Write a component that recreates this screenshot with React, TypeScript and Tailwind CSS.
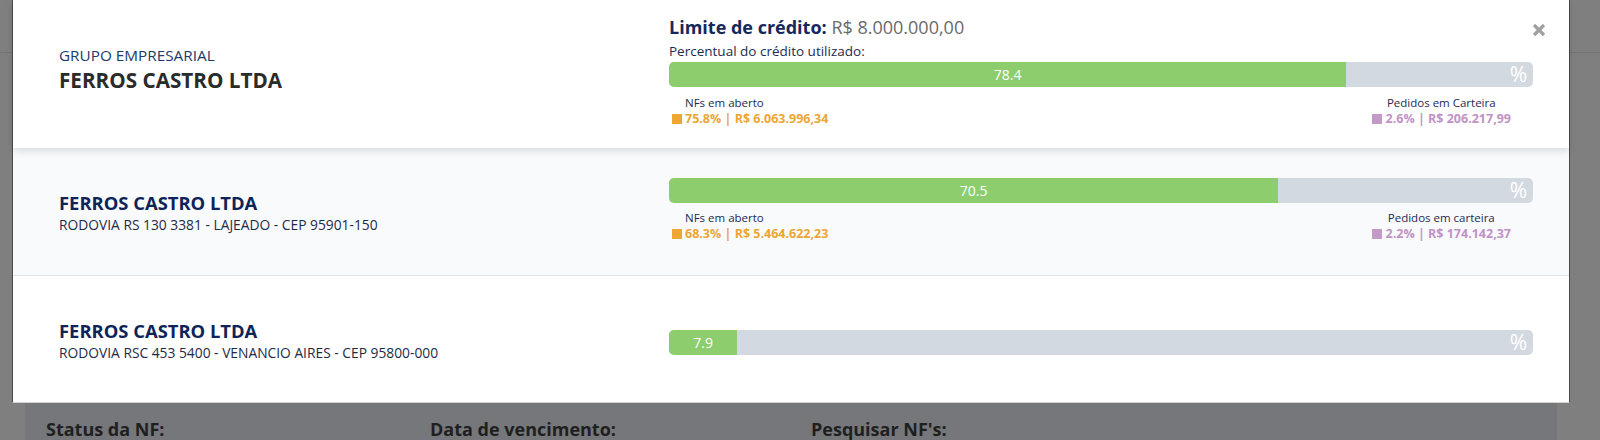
import { ReactNode } from "react";

type RowInfo = {
  name: string;
  address: string;
  used: number;
  nfs?: string;
  pedidos?: string;
};

const rows: RowInfo[] = [
  {
    name: "FERROS CASTRO LTDA",
    address: "RODOVIA RS 130 3381 - LAJEADO - CEP 95901-150",
    used: 70.5,
    nfs: "68.3% | R$ 5.464.622,23",
    pedidos: "2.2% | R$ 174.142,37",
  },
  {
    name: "FERROS CASTRO LTDA",
    address: "RODOVIA RSC 453 5400 - VENANCIO AIRES - CEP 95800-000",
    used: 7.9,
  },
];

function ProgressBar({ value }: { value: number }) {
  return (
    <div className="flex h-[25px] w-full rounded-[5px] bg-[#d3d9e0]">
      <div
        className="flex h-full items-center justify-center rounded-l-[5px] bg-[#8dcd6e] text-[14px] text-white"
        style={{ width: `${value}%` }}
      >
        {value.toFixed(1)}
      </div>
      <div className="flex flex-1 items-center justify-end pr-[6px] text-[21px] leading-[25px] text-white">
        %
      </div>
    </div>
  );
}

function Legend({
  nfs,
  pedidos,
  pedidosLabel,
  className,
}: {
  nfs: string;
  pedidos: string;
  pedidosLabel: string;
  className?: string;
}) {
  return (
    <div className={`flex justify-between ${className ?? ""}`}>
      <div className="ml-[3px]">
        <div className="pl-[13px] text-[11.5px] leading-[17px] text-[#1c2b52]">NFs em aberto</div>
        <div className="flex items-center text-[12.5px] font-bold leading-[16px] text-[#eda534]">
          <span className="mr-[3px] h-[10px] w-[10px] bg-[#f0a732]" />
          {nfs}
        </div>
      </div>
      <div className="mr-[22px] flex flex-col items-center">
        <div className="text-[11.5px] leading-[17px] text-[#1c2b52]">{pedidosLabel}</div>
        <div className="flex items-center text-[12.5px] font-bold leading-[16px] text-[#c192c6]">
          <span className="mr-[4px] h-[10px] w-[10px] bg-[#c49ac8]" />
          {pedidos}
        </div>
      </div>
    </div>
  );
}

function Row({ children, left, className }: { children: ReactNode; left: ReactNode; className: string }) {
  return (
    <div className={`flex pl-[46px] pr-[36px] ${className}`}>
      <div className="w-[610px]">{left}</div>
      <div className="w-[864px]">{children}</div>
    </div>
  );
}

export default function App() {
  return (
    <div className="relative h-[440px] w-[1600px] overflow-hidden bg-[#7f7f7f] font-['Open_Sans',sans-serif]">
      {/* page behind the overlay */}
      <div className="h-[53px] border-b border-[#747474]" />
      <div className="ml-[25px] mt-[20px] h-[400px] w-[1532px] bg-[#75777a] pl-[21px] pt-[344px]">
        <div className="grid grid-cols-[384px_381px_1fr] text-[18px] font-bold leading-[24px] text-[#1f1f1f]">
          <span>Status da NF:</span>
          <span>Data de vencimento:</span>
          <span>Pesquisar NF&apos;s:</span>
        </div>
      </div>

      {/* modal */}
      <div className="absolute left-[12px] top-0 w-[1558px] border-x border-b border-x-[#4a4a4a] border-b-[#d2d2d2] bg-white">
        <button className="absolute right-[23px] top-[23px] z-20 text-[#a0a0a0]" aria-label="Fechar">
          <svg width="14" height="14" viewBox="0 0 14 14" className="block">
            <path d="M2 2 L12 12 M12 2 L2 12" stroke="currentColor" strokeWidth="3.2" />
          </svg>
        </button>

        <Row
          className="relative z-10 h-[148px] bg-white shadow-[0_3px_8px_rgba(0,0,0,0.13)]"
          left={
            <div className="pt-[45px]">
              <div className="text-[15.3px] leading-[21px] text-[#213a6b]">GRUPO EMPRESARIAL</div>
              <div className="text-[20.7px] font-bold leading-[28px] text-[#2b2b2b]">FERROS CASTRO LTDA</div>
            </div>
          }
        >
          <div className="pt-[15px]">
            <div className="text-[18px] leading-[24px]">
              <span className="font-bold text-[#15285a]">Limite de crédito: </span>
              <span className="text-[#6a6a6a]">R$ 8.000.000,00</span>
            </div>
            <div className="mt-[3px] text-[13.5px] leading-[18px] text-[#1d2b4f]">
              Percentual do crédito utilizado:
            </div>
            <div className="mt-[2px]">
              <ProgressBar value={78.4} />
            </div>
            <Legend
              className="mt-[7px]"
              nfs="75.8% | R$ 6.063.996,34"
              pedidos="2.6% | R$ 206.217,99"
              pedidosLabel="Pedidos em Carteira"
            />
          </div>
        </Row>

        {rows.map((r, i) => (
          <Row
            key={i}
            className={
              i === 0
                ? "h-[128px] border-b border-[#e2e4e9] bg-[#f9fafc]"
                : "h-[126px] bg-white"
            }
            left={
              <div className="pt-[43px]">
                <div className="text-[18.4px] font-bold leading-[24px] text-[#0e2458]">{r.name}</div>
                <div className="text-[13.8px] leading-[19px] text-[#1e2a44]">{r.address}</div>
              </div>
            }
          >
            <div className={r.nfs ? "pt-[30px]" : "pt-[54px]"}>
              <ProgressBar value={r.used} />
              {r.nfs && r.pedidos && (
                <Legend
                  className="mt-[6px]"
                  nfs={r.nfs}
                  pedidos={r.pedidos}
                  pedidosLabel="Pedidos em carteira"
                />
              )}
            </div>
          </Row>
        ))}
      </div>
    </div>
  );
}
